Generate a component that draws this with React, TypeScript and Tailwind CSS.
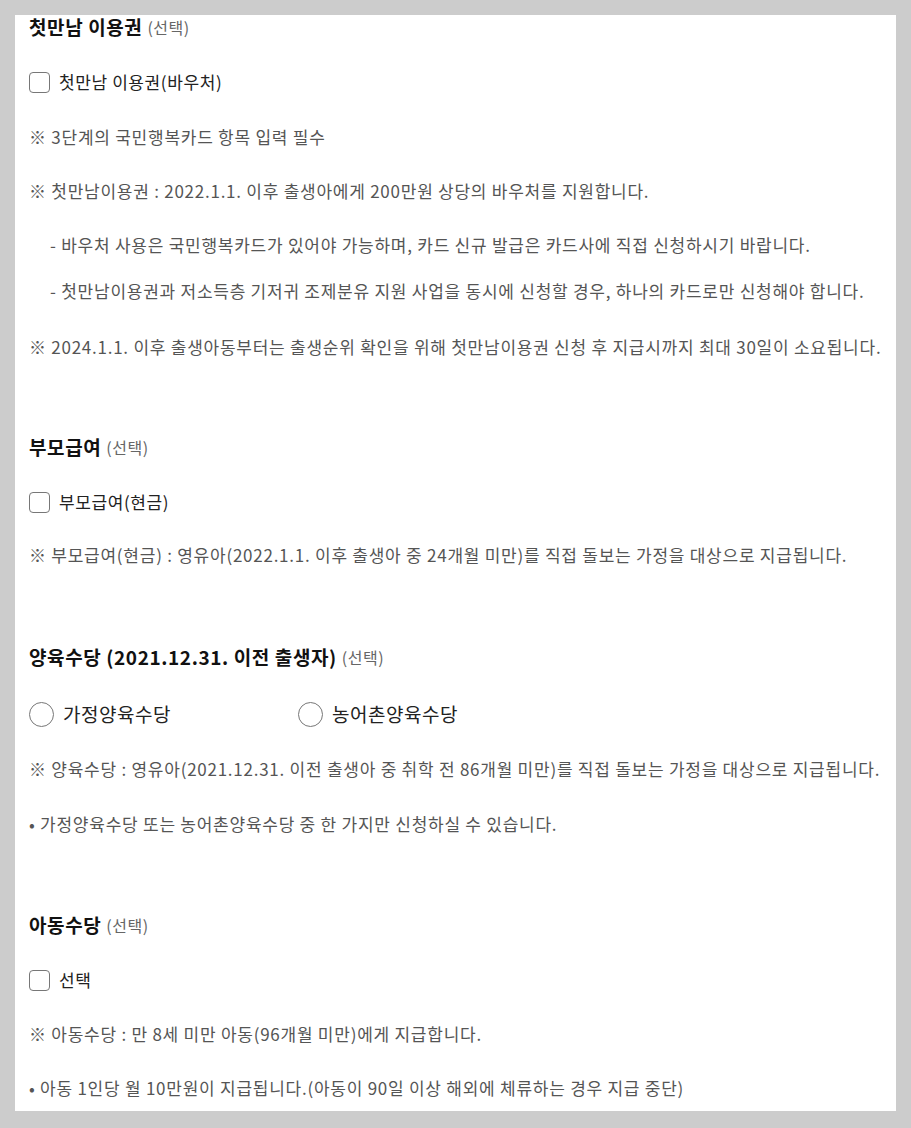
import React from 'react'

const font = { fontFamily: '"Noto Sans CJK KR", "Noto Sans", sans-serif' }

const Heading = ({ title }: { title: string }) => (
  <div className="flex h-6 items-center">
    <span className="text-[19px] font-bold text-[#111] tracking-[0.6px]">{title}</span>
    <span className="ml-[5px] text-[16px] text-[#666] tracking-[0.5px]">(선택)</span>
  </div>
)

const Check = ({ label }: { label: string }) => (
  <label className="mt-[31px] flex h-6 items-center">
    <span className="h-[21px] w-[21px] rounded-[4px] border border-[#777] bg-white" />
    <span className="ml-[9px] text-[17px] text-[#222] tracking-[0.6px]">{label}</span>
  </label>
)

const Radio = ({ label, className = '' }: { label: string; className?: string }) => (
  <label className={`flex items-center ${className}`}>
    <span className="h-[25px] w-[25px] rounded-full border border-[#777]" />
    <span className="ml-[9px] text-[19px] text-[#222] tracking-[0.5px]">{label}</span>
  </label>
)

const Note = ({ children, sub, gap = 'mt-[31px]' }: { children: React.ReactNode; sub?: boolean; gap?: string }) => (
  <p className={`${gap} flex h-6 items-center whitespace-nowrap text-[17px] text-[#555] tracking-[0.75px] ${sub ? 'pl-[21px]' : ''}`}>
    {children}
  </p>
)

export default function App() {
  return (
    <div className="min-h-screen bg-[#cccccc] px-[15px] pt-[15px] pb-[16px]" style={font}>
      <div className="bg-white pl-[14px] pb-[11px]">
        {/* 첫만남 이용권 */}
        <section>
          <Heading title="첫만남 이용권" />
          <Check label="첫만남 이용권(바우처)" />
          <Note>※ 3단계의 국민행복카드 항목 입력 필수</Note>
          <Note gap="mt-[30px]">※ 첫만남이용권 : 2022.1.1. 이후 출생아에게 200만원 상당의 바우처를 지원합니다.</Note>
          <Note sub gap="mt-[30px]">- 바우처 사용은 국민행복카드가 있어야 가능하며, 카드 신규 발급은 카드사에 직접 신청하시기 바랍니다.</Note>
          <Note sub gap="mt-[22px]">- 첫만남이용권과 저소득층 기저귀 조제분유 지원 사업을 동시에 신청할 경우, 하나의 카드로만 신청해야 합니다.</Note>
          <Note gap="mt-[32px]">※ 2024.1.1. 이후 출생아동부터는 출생순위 확인을 위해 첫만남이용권 신청 후 지급시까지 최대 30일이 소요됩니다.</Note>
        </section>

        {/* 부모급여 */}
        <section className="mt-[76px]">
          <Heading title="부모급여" />
          <Check label="부모급여(현금)" />
          <Note gap="mt-[29px]">※ 부모급여(현금) : 영유아(2022.1.1. 이후 출생아 중 24개월 미만)를 직접 돌보는 가정을 대상으로 지급됩니다.</Note>
        </section>

        {/* 양육수당 */}
        <section className="mt-[78px]">
          <Heading title="양육수당 (2021.12.31. 이전 출생자)" />
          <div className="mt-[33px] flex h-6 items-center">
            <Radio label="가정양육수당" className="w-[269px]" />
            <Radio label="농어촌양육수당" />
          </div>
          <Note>※ 양육수당 : 영유아(2021.12.31. 이전 출생아 중 취학 전 86개월 미만)를 직접 돌보는 가정을 대상으로 지급됩니다.</Note>
          <Note>• 가정양육수당 또는 농어촌양육수당 중 한 가지만 신청하실 수 있습니다.</Note>
        </section>

        {/* 아동수당 */}
        <section className="mt-[77px]">
          <Heading title="아동수당" />
          <Check label="선택" />
          <Note gap="mt-[30px]">※ 아동수당 : 만 8세 미만 아동(96개월 미만)에게 지급합니다.</Note>
          <Note gap="mt-[30px]">• 아동 1인당 월 10만원이 지급됩니다.(아동이 90일 이상 해외에 체류하는 경우 지급 중단)</Note>
        </section>
      </div>
    </div>
  )
}
